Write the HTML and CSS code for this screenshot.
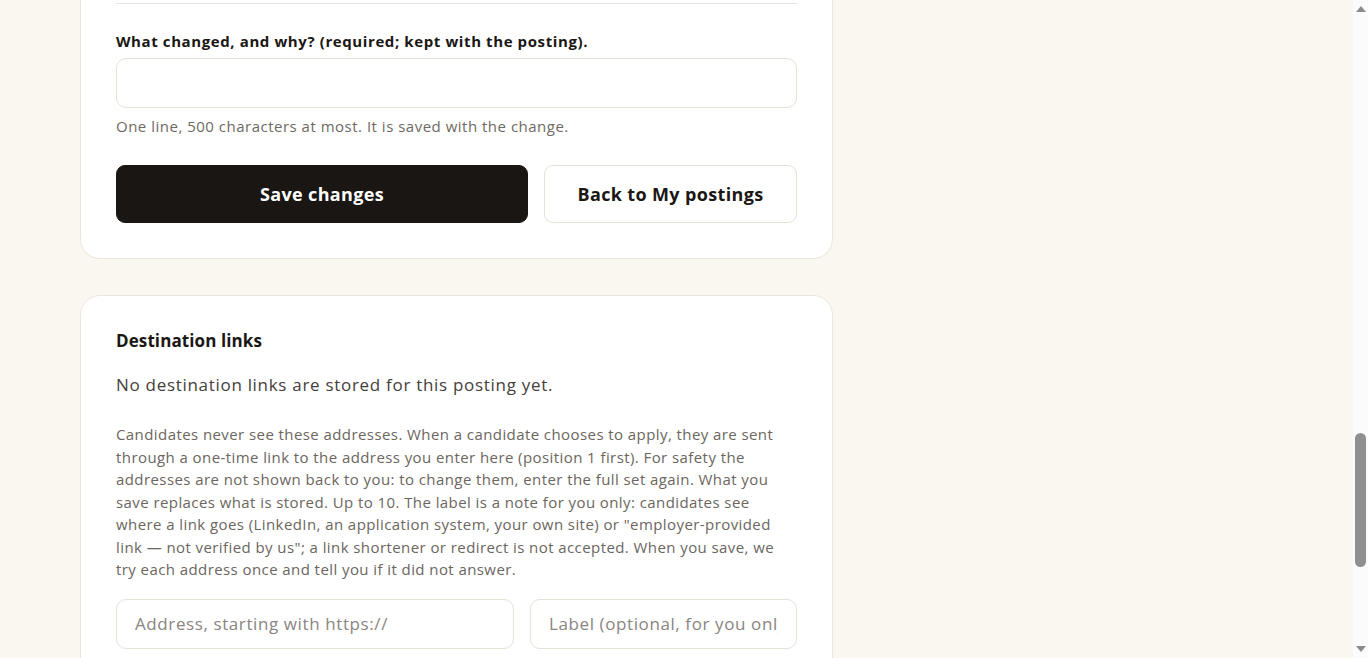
FILE: index.html
```html
<!DOCTYPE html>
<html lang="en">
<head>
<meta charset="utf-8">
<title>Edit posting</title>
<link rel="stylesheet" href="styles.css">
</head>
<body>
<main class="page">
  <section class="card card-continued">
    <div class="divider"></div>
    <label class="field-label" for="reason">What changed, and why? (required; kept with the posting).</label>
    <input class="text-input" id="reason" type="text">
    <p class="hint">One line, 500 characters at most. It is saved with the change.</p>
    <div class="actions">
      <button class="btn btn-primary" type="button">Save changes</button>
      <button class="btn btn-secondary" type="button">Back to My postings</button>
    </div>
  </section>

  <section class="card">
    <h2 class="card-title">Destination links</h2>
    <p class="empty-note">No destination links are stored for this posting yet.</p>
    <p class="explain">Candidates never see these addresses. When a candidate chooses to apply, they are sent through a one-time link to the address you enter here (position 1 first). For safety the addresses are not shown back to you: to change them, enter the full set again. What you save replaces what is stored. Up to 10. The label is a note for you only: candidates see where a link goes (LinkedIn, an application system, your own site) or "employer-provided link — not verified by us"; a link shortener or redirect is not accepted. When you save, we try each address once and tell you if it did not answer.</p>
    <div class="link-row">
      <input class="text-input input-lg address" type="text" placeholder="Address, starting with https://">
      <input class="text-input input-lg label-input" type="text" placeholder="Label (optional, for you only)">
    </div>
  </section>
</main>
<div class="scrollbar" aria-hidden="true">
  <svg class="sb-arrow" width="10" height="6" viewBox="0 0 10 6"><polygon points="5,0 10,6 0,6" fill="#8c8c8c"/></svg>
  <span class="sb-track"><span class="sb-thumb"></span></span>
  <svg class="sb-arrow" width="10" height="6" viewBox="0 0 10 6"><polygon points="0,0 10,0 5,6" fill="#8c8c8c"/></svg>
</div>
</body>
</html>
```

FILE: styles.css
```css
html {
  background: #faf7f1;
}

body {
  margin: 0;
  font-family: "Open Sans", "Liberation Sans", sans-serif;
  color: #1a1714;
  background: #faf7f1;
}

.page {
  width: 753px;
  margin-left: 80px;
  display: flex;
  flex-direction: column;
  gap: 36px;
  padding-bottom: 200px;
}

.card {
  background: #ffffff;
  border: 1px solid #ece7de;
  border-radius: 20px;
  padding: 35px;
  display: flex;
  flex-direction: column;
}

.card-continued {
  border-top: none;
  border-radius: 0 0 20px 20px;
  padding-top: 3px;
}

.divider {
  border-top: 1px solid #e9e5de;
}

.field-label {
  margin-top: 27px;
  font-size: 15px;
  line-height: 20px;
  font-weight: 700;
  letter-spacing: 0.6px;
  color: #1a1714;
}

.text-input {
  box-sizing: border-box;
  height: 50px;
  border: 1px solid #e6e1d9;
  border-radius: 10px;
  background: #fff;
  font-family: inherit;
  padding: 0 18px;
  outline: none;
}

#reason {
  margin-top: 7px;
  width: 100%;
  font-size: 15px;
}

.hint {
  margin: 7px 0 0;
  font-size: 15px;
  line-height: 22px;
  letter-spacing: 0.5px;
  color: #6e6963;
}

.actions {
  margin-top: 28px;
  display: flex;
  gap: 16px;
}

.btn {
  height: 58px;
  border-radius: 9px;
  font-family: inherit;
  font-size: 18px;
  font-weight: 700;
  letter-spacing: 0.35px;
  cursor: pointer;
}

.btn-primary {
  flex: 0 0 412px;
  background: #1a1613;
  color: #ffffff;
  border: 1px solid #1a1613;
}

.btn-secondary {
  flex: 1 1 auto;
  background: #ffffff;
  color: #1a1714;
  border: 1px solid #e6e1d9;
}

.card-title {
  margin: 0;
  font-size: 17px;
  line-height: 20px;
  font-weight: 700;
  letter-spacing: 0.1px;
  color: #1a1714;
}

.empty-note {
  margin: 22px 0 0;
  font-size: 17px;
  line-height: 24px;
  letter-spacing: 0.7px;
  color: #45403b;
}

.explain {
  margin: 26px 0 0;
  font-size: 15px;
  line-height: 22.5px;
  letter-spacing: 0.42px;
  color: #6b6660;
}

.link-row {
  margin-top: 18px;
  display: flex;
  gap: 16px;
}

.input-lg {
  font-size: 17px;
  letter-spacing: 0.6px;
  color: #1a1714;
}

.input-lg::placeholder {
  color: #8a857f;
}

.address {
  flex: 0 0 398px;
}

.label-input {
  flex: 1 1 auto;
  min-width: 0;
}

/* browser scrollbar as seen in the reference */
.scrollbar {
  position: fixed;
  top: 0;
  right: 0;
  bottom: 0;
  width: 15px;
  background: #fbfbfb;
  display: flex;
  flex-direction: column;
  align-items: center;
  padding: 6px 0;
  box-sizing: border-box;
}

.sb-arrow {
  flex: 0 0 auto;
  display: block;
}

.sb-track {
  flex: 1 1 auto;
  width: 100%;
  display: flex;
  flex-direction: column;
  align-items: center;
  padding-top: 421px;
}

.sb-thumb {
  width: 11px;
  height: 134px;
  border-radius: 6px;
  background: #8f8f8f;
}
```
